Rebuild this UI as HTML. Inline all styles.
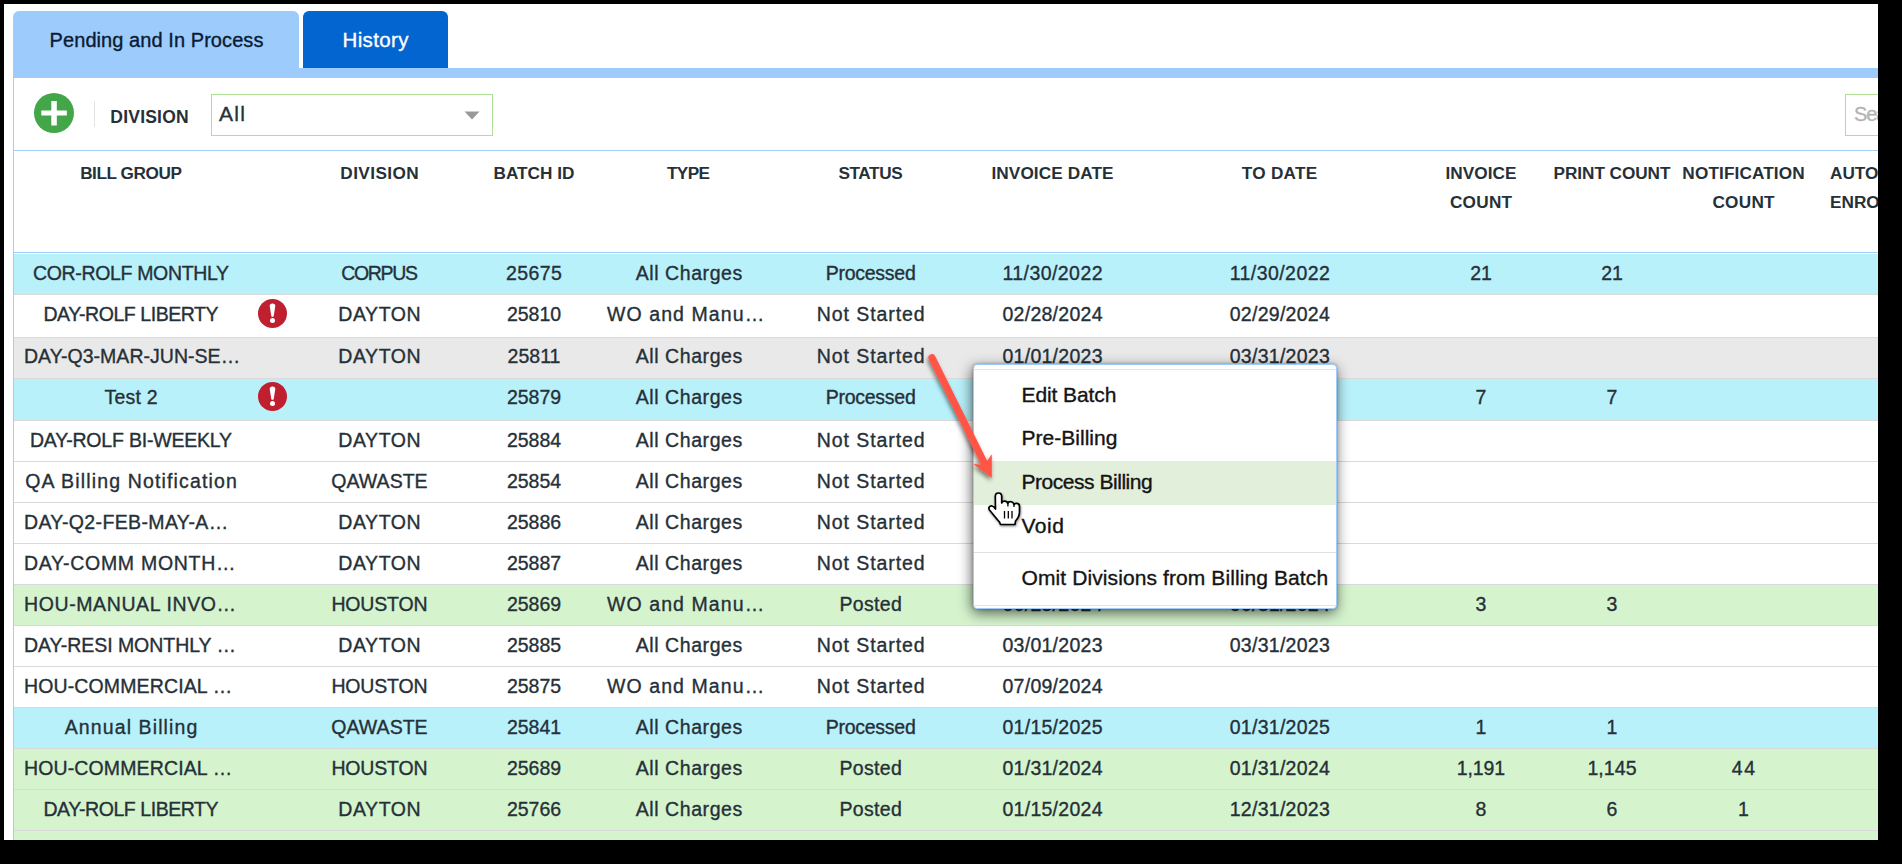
<!DOCTYPE html>
<html><head><meta charset="utf-8"><title>Billing</title>
<style>
html,body{margin:0;padding:0;}
body{width:1902px;height:864px;background:#000;position:relative;overflow:hidden;font-family:"Liberation Sans", sans-serif;}
.r{-webkit-text-stroke:0.35px currentColor;}
</style></head><body>
<div style="position:absolute;left:0;top:0;width:1878px;height:840px;overflow:hidden;">
<div style="position:absolute;left:4px;top:4px;width:1874px;height:836px;background:#fff;"></div>
<div style="position:absolute;left:13px;top:11px;width:286px;height:58px;background:#9dcbfc;border-radius:6px 6px 0 0;"></div>
<div style="position:absolute;left:303px;top:11px;width:145px;height:57px;background:#0365d0;border-radius:6px 6px 0 0;"></div>
<div style="position:absolute;left:13px;top:68px;width:1865px;height:10px;background:#9dcbfc;"></div>
<div class="r" style="position:absolute;left:-143.50px;top:30.07px;width:600px;height:20px;line-height:20px;font-size:20px;font-weight:400;color:#0b1b33;text-align:center;white-space:nowrap;letter-spacing:0.068px;margin-left:0.034px;">Pending and In Process</div>
<div class="r" style="position:absolute;left:75.50px;top:29.64px;width:600px;height:20.5px;line-height:20.5px;font-size:20.5px;font-weight:400;color:#ffffff;text-align:center;white-space:nowrap;letter-spacing:0.341px;margin-left:0.171px;">History</div>
<div style="position:absolute;left:13px;top:78px;width:1px;height:762px;background:#a3ccf7;"></div>
<svg style="position:absolute;left:34px;top:93px" width="40" height="40" viewBox="0 0 40 40"><circle cx="20" cy="20" r="20" fill="#43a648"/><rect x="7.3" y="17.5" width="25.5" height="5" fill="#fff"/><rect x="17.3" y="8" width="5.5" height="24.5" fill="#fff"/></svg>
<div style="position:absolute;left:94px;top:101px;width:1px;height:26px;background:#e3e3e3;"></div>
<div style="position:absolute;left:-150.50px;top:109.18px;width:600px;height:17.5px;line-height:17.5px;font-size:17.5px;font-weight:700;color:#263038;text-align:center;white-space:nowrap;letter-spacing:0.207px;margin-left:0.103px;">DIVISION</div>
<div style="position:absolute;left:211px;top:94px;width:282px;height:42px;border:1px solid #ade196;box-sizing:border-box;background:#fff;"></div>
<div class="r" style="position:absolute;left:219.00px;top:103.22px;width:1000px;height:21px;line-height:21px;font-size:21px;font-weight:400;color:#263038;text-align:left;white-space:nowrap;letter-spacing:1.273px;">All</div>
<svg style="position:absolute;left:464px;top:111px" width="16" height="9" viewBox="0 0 16 9"><path d="M0.5 0.5 L15.5 0.5 L8 8.5 Z" fill="#999"/></svg>
<div style="position:absolute;left:1845px;top:94px;width:40px;height:42px;border:1px solid #ade196;box-sizing:border-box;background:#fff;"></div>
<div class="r" style="position:absolute;left:1854.00px;top:104.07px;width:1000px;height:20px;line-height:20px;font-size:20px;font-weight:400;color:#b4b4b4;text-align:left;white-space:nowrap;letter-spacing:-1.2px;">Search</div>
<div style="position:absolute;left:13px;top:150px;width:1865px;height:1px;background:#a3ccf7;"></div>
<div style="position:absolute;left:13px;top:252px;width:1865px;height:1px;background:#a3ccf7;"></div>
<div style="position:absolute;left:-169.00px;top:165.14px;width:600px;height:17.2px;line-height:17.2px;font-size:17.2px;font-weight:700;color:#263038;text-align:center;white-space:nowrap;letter-spacing:-0.438px;margin-left:-0.219px;">BILL GROUP</div>
<div style="position:absolute;left:79.50px;top:165.14px;width:600px;height:17.2px;line-height:17.2px;font-size:17.2px;font-weight:700;color:#263038;text-align:center;white-space:nowrap;letter-spacing:0.399px;margin-left:0.200px;">DIVISION</div>
<div style="position:absolute;left:234.00px;top:165.14px;width:600px;height:17.2px;line-height:17.2px;font-size:17.2px;font-weight:700;color:#263038;text-align:center;white-space:nowrap;letter-spacing:0.015px;margin-left:0.007px;">BATCH ID</div>
<div style="position:absolute;left:388.50px;top:165.14px;width:600px;height:17.2px;line-height:17.2px;font-size:17.2px;font-weight:700;color:#263038;text-align:center;white-space:nowrap;letter-spacing:-0.581px;margin-left:-0.290px;">TYPE</div>
<div style="position:absolute;left:570.50px;top:165.14px;width:600px;height:17.2px;line-height:17.2px;font-size:17.2px;font-weight:700;color:#263038;text-align:center;white-space:nowrap;letter-spacing:-0.391px;margin-left:-0.196px;">STATUS</div>
<div style="position:absolute;left:752.50px;top:165.14px;width:600px;height:17.2px;line-height:17.2px;font-size:17.2px;font-weight:700;color:#263038;text-align:center;white-space:nowrap;letter-spacing:0.107px;margin-left:0.054px;">INVOICE DATE</div>
<div style="position:absolute;left:979.50px;top:165.14px;width:600px;height:17.2px;line-height:17.2px;font-size:17.2px;font-weight:700;color:#263038;text-align:center;white-space:nowrap;letter-spacing:0.267px;margin-left:0.134px;">TO DATE</div>
<div style="position:absolute;left:1181.00px;top:165.14px;width:600px;height:17.2px;line-height:17.2px;font-size:17.2px;font-weight:700;color:#263038;text-align:center;white-space:nowrap;letter-spacing:0.029px;margin-left:0.015px;">INVOICE</div>
<div style="position:absolute;left:1181.00px;top:194.14px;width:600px;height:17.2px;line-height:17.2px;font-size:17.2px;font-weight:700;color:#263038;text-align:center;white-space:nowrap;letter-spacing:0.260px;margin-left:0.130px;">COUNT</div>
<div style="position:absolute;left:1312.00px;top:165.14px;width:600px;height:17.2px;line-height:17.2px;font-size:17.2px;font-weight:700;color:#263038;text-align:center;white-space:nowrap;letter-spacing:-0.061px;margin-left:-0.030px;">PRINT COUNT</div>
<div style="position:absolute;left:1443.50px;top:165.14px;width:600px;height:17.2px;line-height:17.2px;font-size:17.2px;font-weight:700;color:#263038;text-align:center;white-space:nowrap;letter-spacing:0.119px;margin-left:0.060px;">NOTIFICATION</div>
<div style="position:absolute;left:1443.50px;top:194.14px;width:600px;height:17.2px;line-height:17.2px;font-size:17.2px;font-weight:700;color:#263038;text-align:center;white-space:nowrap;letter-spacing:0.260px;margin-left:0.130px;">COUNT</div>
<div style="position:absolute;left:1830.00px;top:165.14px;width:1000px;height:17.2px;line-height:17.2px;font-size:17.2px;font-weight:700;color:#263038;text-align:left;white-space:nowrap;">AUTO</div>
<div style="position:absolute;left:1830.00px;top:194.14px;width:1000px;height:17.2px;line-height:17.2px;font-size:17.2px;font-weight:700;color:#263038;text-align:left;white-space:nowrap;">ENROLLED</div>
<div style="position:absolute;left:14px;top:254px;width:1864px;height:40px;background:#b9f1fb;"></div>
<div style="position:absolute;left:14px;top:294px;width:1864px;height:1px;background:#dadada;"></div>
<div class="r" style="position:absolute;left:-169.00px;top:264.49px;width:600px;height:19.5px;line-height:19.5px;font-size:19.5px;font-weight:400;color:#263038;text-align:center;white-space:nowrap;letter-spacing:-0.327px;margin-left:-0.163px;">COR-ROLF MONTHLY</div>
<div class="r" style="position:absolute;left:79.50px;top:264.49px;width:600px;height:19.5px;line-height:19.5px;font-size:19.5px;font-weight:400;color:#263038;text-align:center;white-space:nowrap;letter-spacing:-1.337px;margin-left:-0.668px;">CORPUS</div>
<div class="r" style="position:absolute;left:234.00px;top:264.49px;width:600px;height:19.5px;line-height:19.5px;font-size:19.5px;font-weight:400;color:#263038;text-align:center;white-space:nowrap;letter-spacing:0.430px;margin-left:0.215px;">25675</div>
<div class="r" style="position:absolute;left:389.00px;top:264.49px;width:600px;height:19.5px;line-height:19.5px;font-size:19.5px;font-weight:400;color:#263038;text-align:center;white-space:nowrap;letter-spacing:0.576px;margin-left:0.288px;">All Charges</div>
<div class="r" style="position:absolute;left:570.70px;top:264.49px;width:600px;height:19.5px;line-height:19.5px;font-size:19.5px;font-weight:400;color:#263038;text-align:center;white-space:nowrap;letter-spacing:-0.248px;margin-left:-0.124px;">Processed</div>
<div class="r" style="position:absolute;left:752.50px;top:264.49px;width:600px;height:19.5px;line-height:19.5px;font-size:19.5px;font-weight:400;color:#263038;text-align:center;white-space:nowrap;letter-spacing:0.433px;margin-left:0.217px;">11/30/2022</div>
<div class="r" style="position:absolute;left:979.80px;top:264.49px;width:600px;height:19.5px;line-height:19.5px;font-size:19.5px;font-weight:400;color:#263038;text-align:center;white-space:nowrap;letter-spacing:0.433px;margin-left:0.217px;">11/30/2022</div>
<div class="r" style="position:absolute;left:1181.00px;top:264.49px;width:600px;height:19.5px;line-height:19.5px;font-size:19.5px;font-weight:400;color:#263038;text-align:center;white-space:nowrap;">21</div>
<div class="r" style="position:absolute;left:1312.00px;top:264.49px;width:600px;height:19.5px;line-height:19.5px;font-size:19.5px;font-weight:400;color:#263038;text-align:center;white-space:nowrap;">21</div>
<div class="r" style="position:absolute;left:1443.50px;top:264.49px;width:600px;height:19.5px;line-height:19.5px;font-size:19.5px;font-weight:400;color:#263038;text-align:center;white-space:nowrap;"></div>
<div style="position:absolute;left:14px;top:295px;width:1864px;height:42px;background:#ffffff;"></div>
<div style="position:absolute;left:14px;top:337px;width:1864px;height:1px;background:#dadada;"></div>
<div class="r" style="position:absolute;left:-169.00px;top:305.49px;width:600px;height:19.5px;line-height:19.5px;font-size:19.5px;font-weight:400;color:#263038;text-align:center;white-space:nowrap;letter-spacing:-0.443px;margin-left:-0.222px;">DAY-ROLF LIBERTY</div>
<svg style="position:absolute;left:257.9px;top:299.0px" width="29" height="29" viewBox="0 0 29 29"><circle cx="14.5" cy="14.5" r="14.5" fill="#c01f2f"/><path d="M11.7 7 Q11.7 4.5 14.5 4.5 Q17.3 4.5 17.3 7 L15.7 17.3 Q14.5 18.3 13.3 17.3 Z" fill="#fff"/><circle cx="14.5" cy="21.4" r="2.5" fill="#fff"/></svg>
<div class="r" style="position:absolute;left:79.50px;top:305.49px;width:600px;height:19.5px;line-height:19.5px;font-size:19.5px;font-weight:400;color:#263038;text-align:center;white-space:nowrap;letter-spacing:0.557px;margin-left:0.279px;">DAYTON</div>
<div class="r" style="position:absolute;left:234.00px;top:305.49px;width:600px;height:19.5px;line-height:19.5px;font-size:19.5px;font-weight:400;color:#263038;text-align:center;white-space:nowrap;">25810</div>
<div class="r" style="position:absolute;left:607.00px;top:305.49px;width:1000px;height:19.5px;line-height:19.5px;font-size:19.5px;font-weight:400;color:#263038;text-align:left;white-space:nowrap;letter-spacing:1.084px;">WO and Manu…</div>
<div class="r" style="position:absolute;left:570.70px;top:305.49px;width:600px;height:19.5px;line-height:19.5px;font-size:19.5px;font-weight:400;color:#263038;text-align:center;white-space:nowrap;letter-spacing:0.931px;margin-left:0.466px;">Not Started</div>
<div class="r" style="position:absolute;left:752.50px;top:305.49px;width:600px;height:19.5px;line-height:19.5px;font-size:19.5px;font-weight:400;color:#263038;text-align:center;white-space:nowrap;letter-spacing:0.272px;margin-left:0.136px;">02/28/2024</div>
<div class="r" style="position:absolute;left:979.80px;top:305.49px;width:600px;height:19.5px;line-height:19.5px;font-size:19.5px;font-weight:400;color:#263038;text-align:center;white-space:nowrap;letter-spacing:0.272px;margin-left:0.136px;">02/29/2024</div>
<div class="r" style="position:absolute;left:1181.00px;top:305.49px;width:600px;height:19.5px;line-height:19.5px;font-size:19.5px;font-weight:400;color:#263038;text-align:center;white-space:nowrap;"></div>
<div class="r" style="position:absolute;left:1312.00px;top:305.49px;width:600px;height:19.5px;line-height:19.5px;font-size:19.5px;font-weight:400;color:#263038;text-align:center;white-space:nowrap;"></div>
<div class="r" style="position:absolute;left:1443.50px;top:305.49px;width:600px;height:19.5px;line-height:19.5px;font-size:19.5px;font-weight:400;color:#263038;text-align:center;white-space:nowrap;"></div>
<div style="position:absolute;left:14px;top:338px;width:1864px;height:40px;background:#e9e9e9;"></div>
<div style="position:absolute;left:14px;top:378px;width:1864px;height:1px;background:#dadada;"></div>
<div class="r" style="position:absolute;left:24.00px;top:346.99px;width:1000px;height:19.5px;line-height:19.5px;font-size:19.5px;font-weight:400;color:#263038;text-align:left;white-space:nowrap;letter-spacing:0.032px;">DAY-Q3-MAR-JUN-SE…</div>
<div class="r" style="position:absolute;left:79.50px;top:346.99px;width:600px;height:19.5px;line-height:19.5px;font-size:19.5px;font-weight:400;color:#263038;text-align:center;white-space:nowrap;letter-spacing:0.557px;margin-left:0.279px;">DAYTON</div>
<div class="r" style="position:absolute;left:234.00px;top:346.99px;width:600px;height:19.5px;line-height:19.5px;font-size:19.5px;font-weight:400;color:#263038;text-align:center;white-space:nowrap;">25811</div>
<div class="r" style="position:absolute;left:389.00px;top:346.99px;width:600px;height:19.5px;line-height:19.5px;font-size:19.5px;font-weight:400;color:#263038;text-align:center;white-space:nowrap;letter-spacing:0.576px;margin-left:0.288px;">All Charges</div>
<div class="r" style="position:absolute;left:570.70px;top:346.99px;width:600px;height:19.5px;line-height:19.5px;font-size:19.5px;font-weight:400;color:#263038;text-align:center;white-space:nowrap;letter-spacing:0.931px;margin-left:0.466px;">Not Started</div>
<div class="r" style="position:absolute;left:752.50px;top:346.99px;width:600px;height:19.5px;line-height:19.5px;font-size:19.5px;font-weight:400;color:#263038;text-align:center;white-space:nowrap;letter-spacing:0.272px;margin-left:0.136px;">01/01/2023</div>
<div class="r" style="position:absolute;left:979.80px;top:346.99px;width:600px;height:19.5px;line-height:19.5px;font-size:19.5px;font-weight:400;color:#263038;text-align:center;white-space:nowrap;letter-spacing:0.272px;margin-left:0.136px;">03/31/2023</div>
<div class="r" style="position:absolute;left:1181.00px;top:346.99px;width:600px;height:19.5px;line-height:19.5px;font-size:19.5px;font-weight:400;color:#263038;text-align:center;white-space:nowrap;"></div>
<div class="r" style="position:absolute;left:1312.00px;top:346.99px;width:600px;height:19.5px;line-height:19.5px;font-size:19.5px;font-weight:400;color:#263038;text-align:center;white-space:nowrap;"></div>
<div class="r" style="position:absolute;left:1443.50px;top:346.99px;width:600px;height:19.5px;line-height:19.5px;font-size:19.5px;font-weight:400;color:#263038;text-align:center;white-space:nowrap;"></div>
<div style="position:absolute;left:14px;top:379px;width:1864px;height:41px;background:#b9f1fb;"></div>
<div style="position:absolute;left:14px;top:420px;width:1864px;height:1px;background:#dadada;"></div>
<div class="r" style="position:absolute;left:-169.00px;top:388.49px;width:600px;height:19.5px;line-height:19.5px;font-size:19.5px;font-weight:400;color:#263038;text-align:center;white-space:nowrap;letter-spacing:0.205px;margin-left:0.102px;">Test 2</div>
<svg style="position:absolute;left:257.9px;top:382.0px" width="29" height="29" viewBox="0 0 29 29"><circle cx="14.5" cy="14.5" r="14.5" fill="#c01f2f"/><path d="M11.7 7 Q11.7 4.5 14.5 4.5 Q17.3 4.5 17.3 7 L15.7 17.3 Q14.5 18.3 13.3 17.3 Z" fill="#fff"/><circle cx="14.5" cy="21.4" r="2.5" fill="#fff"/></svg>
<div class="r" style="position:absolute;left:79.50px;top:388.49px;width:600px;height:19.5px;line-height:19.5px;font-size:19.5px;font-weight:400;color:#263038;text-align:center;white-space:nowrap;"></div>
<div class="r" style="position:absolute;left:234.00px;top:388.49px;width:600px;height:19.5px;line-height:19.5px;font-size:19.5px;font-weight:400;color:#263038;text-align:center;white-space:nowrap;">25879</div>
<div class="r" style="position:absolute;left:389.00px;top:388.49px;width:600px;height:19.5px;line-height:19.5px;font-size:19.5px;font-weight:400;color:#263038;text-align:center;white-space:nowrap;letter-spacing:0.576px;margin-left:0.288px;">All Charges</div>
<div class="r" style="position:absolute;left:570.70px;top:388.49px;width:600px;height:19.5px;line-height:19.5px;font-size:19.5px;font-weight:400;color:#263038;text-align:center;white-space:nowrap;letter-spacing:-0.248px;margin-left:-0.124px;">Processed</div>
<div class="r" style="position:absolute;left:752.50px;top:388.49px;width:600px;height:19.5px;line-height:19.5px;font-size:19.5px;font-weight:400;color:#263038;text-align:center;white-space:nowrap;letter-spacing:0.272px;margin-left:0.136px;">02/01/2024</div>
<div class="r" style="position:absolute;left:979.80px;top:388.49px;width:600px;height:19.5px;line-height:19.5px;font-size:19.5px;font-weight:400;color:#263038;text-align:center;white-space:nowrap;letter-spacing:0.272px;margin-left:0.136px;">02/29/2024</div>
<div class="r" style="position:absolute;left:1181.00px;top:388.49px;width:600px;height:19.5px;line-height:19.5px;font-size:19.5px;font-weight:400;color:#263038;text-align:center;white-space:nowrap;">7</div>
<div class="r" style="position:absolute;left:1312.00px;top:388.49px;width:600px;height:19.5px;line-height:19.5px;font-size:19.5px;font-weight:400;color:#263038;text-align:center;white-space:nowrap;">7</div>
<div class="r" style="position:absolute;left:1443.50px;top:388.49px;width:600px;height:19.5px;line-height:19.5px;font-size:19.5px;font-weight:400;color:#263038;text-align:center;white-space:nowrap;"></div>
<div style="position:absolute;left:14px;top:421px;width:1864px;height:40px;background:#ffffff;"></div>
<div style="position:absolute;left:14px;top:461px;width:1864px;height:1px;background:#dadada;"></div>
<div class="r" style="position:absolute;left:-169.00px;top:430.99px;width:600px;height:19.5px;line-height:19.5px;font-size:19.5px;font-weight:400;color:#263038;text-align:center;white-space:nowrap;letter-spacing:-0.199px;margin-left:-0.099px;">DAY-ROLF BI-WEEKLY</div>
<div class="r" style="position:absolute;left:79.50px;top:430.99px;width:600px;height:19.5px;line-height:19.5px;font-size:19.5px;font-weight:400;color:#263038;text-align:center;white-space:nowrap;letter-spacing:0.557px;margin-left:0.279px;">DAYTON</div>
<div class="r" style="position:absolute;left:234.00px;top:430.99px;width:600px;height:19.5px;line-height:19.5px;font-size:19.5px;font-weight:400;color:#263038;text-align:center;white-space:nowrap;">25884</div>
<div class="r" style="position:absolute;left:389.00px;top:430.99px;width:600px;height:19.5px;line-height:19.5px;font-size:19.5px;font-weight:400;color:#263038;text-align:center;white-space:nowrap;letter-spacing:0.576px;margin-left:0.288px;">All Charges</div>
<div class="r" style="position:absolute;left:570.70px;top:430.99px;width:600px;height:19.5px;line-height:19.5px;font-size:19.5px;font-weight:400;color:#263038;text-align:center;white-space:nowrap;letter-spacing:0.931px;margin-left:0.466px;">Not Started</div>
<div class="r" style="position:absolute;left:752.50px;top:430.99px;width:600px;height:19.5px;line-height:19.5px;font-size:19.5px;font-weight:400;color:#263038;text-align:center;white-space:nowrap;"></div>
<div class="r" style="position:absolute;left:979.80px;top:430.99px;width:600px;height:19.5px;line-height:19.5px;font-size:19.5px;font-weight:400;color:#263038;text-align:center;white-space:nowrap;"></div>
<div class="r" style="position:absolute;left:1181.00px;top:430.99px;width:600px;height:19.5px;line-height:19.5px;font-size:19.5px;font-weight:400;color:#263038;text-align:center;white-space:nowrap;"></div>
<div class="r" style="position:absolute;left:1312.00px;top:430.99px;width:600px;height:19.5px;line-height:19.5px;font-size:19.5px;font-weight:400;color:#263038;text-align:center;white-space:nowrap;"></div>
<div class="r" style="position:absolute;left:1443.50px;top:430.99px;width:600px;height:19.5px;line-height:19.5px;font-size:19.5px;font-weight:400;color:#263038;text-align:center;white-space:nowrap;"></div>
<div style="position:absolute;left:14px;top:462px;width:1864px;height:40px;background:#ffffff;"></div>
<div style="position:absolute;left:14px;top:502px;width:1864px;height:1px;background:#dadada;"></div>
<div class="r" style="position:absolute;left:-169.00px;top:471.99px;width:600px;height:19.5px;line-height:19.5px;font-size:19.5px;font-weight:400;color:#263038;text-align:center;white-space:nowrap;letter-spacing:1.147px;margin-left:0.573px;">QA Billing Notification</div>
<div class="r" style="position:absolute;left:79.50px;top:471.99px;width:600px;height:19.5px;line-height:19.5px;font-size:19.5px;font-weight:400;color:#263038;text-align:center;white-space:nowrap;letter-spacing:0.032px;margin-left:0.016px;">QAWASTE</div>
<div class="r" style="position:absolute;left:234.00px;top:471.99px;width:600px;height:19.5px;line-height:19.5px;font-size:19.5px;font-weight:400;color:#263038;text-align:center;white-space:nowrap;">25854</div>
<div class="r" style="position:absolute;left:389.00px;top:471.99px;width:600px;height:19.5px;line-height:19.5px;font-size:19.5px;font-weight:400;color:#263038;text-align:center;white-space:nowrap;letter-spacing:0.576px;margin-left:0.288px;">All Charges</div>
<div class="r" style="position:absolute;left:570.70px;top:471.99px;width:600px;height:19.5px;line-height:19.5px;font-size:19.5px;font-weight:400;color:#263038;text-align:center;white-space:nowrap;letter-spacing:0.931px;margin-left:0.466px;">Not Started</div>
<div class="r" style="position:absolute;left:752.50px;top:471.99px;width:600px;height:19.5px;line-height:19.5px;font-size:19.5px;font-weight:400;color:#263038;text-align:center;white-space:nowrap;"></div>
<div class="r" style="position:absolute;left:979.80px;top:471.99px;width:600px;height:19.5px;line-height:19.5px;font-size:19.5px;font-weight:400;color:#263038;text-align:center;white-space:nowrap;"></div>
<div class="r" style="position:absolute;left:1181.00px;top:471.99px;width:600px;height:19.5px;line-height:19.5px;font-size:19.5px;font-weight:400;color:#263038;text-align:center;white-space:nowrap;"></div>
<div class="r" style="position:absolute;left:1312.00px;top:471.99px;width:600px;height:19.5px;line-height:19.5px;font-size:19.5px;font-weight:400;color:#263038;text-align:center;white-space:nowrap;"></div>
<div class="r" style="position:absolute;left:1443.50px;top:471.99px;width:600px;height:19.5px;line-height:19.5px;font-size:19.5px;font-weight:400;color:#263038;text-align:center;white-space:nowrap;"></div>
<div style="position:absolute;left:14px;top:503px;width:1864px;height:40px;background:#ffffff;"></div>
<div style="position:absolute;left:14px;top:543px;width:1864px;height:1px;background:#dadada;"></div>
<div class="r" style="position:absolute;left:24.00px;top:512.99px;width:1000px;height:19.5px;line-height:19.5px;font-size:19.5px;font-weight:400;color:#263038;text-align:left;white-space:nowrap;letter-spacing:0.366px;">DAY-Q2-FEB-MAY-A…</div>
<div class="r" style="position:absolute;left:79.50px;top:512.99px;width:600px;height:19.5px;line-height:19.5px;font-size:19.5px;font-weight:400;color:#263038;text-align:center;white-space:nowrap;letter-spacing:0.557px;margin-left:0.279px;">DAYTON</div>
<div class="r" style="position:absolute;left:234.00px;top:512.99px;width:600px;height:19.5px;line-height:19.5px;font-size:19.5px;font-weight:400;color:#263038;text-align:center;white-space:nowrap;">25886</div>
<div class="r" style="position:absolute;left:389.00px;top:512.99px;width:600px;height:19.5px;line-height:19.5px;font-size:19.5px;font-weight:400;color:#263038;text-align:center;white-space:nowrap;letter-spacing:0.576px;margin-left:0.288px;">All Charges</div>
<div class="r" style="position:absolute;left:570.70px;top:512.99px;width:600px;height:19.5px;line-height:19.5px;font-size:19.5px;font-weight:400;color:#263038;text-align:center;white-space:nowrap;letter-spacing:0.931px;margin-left:0.466px;">Not Started</div>
<div class="r" style="position:absolute;left:752.50px;top:512.99px;width:600px;height:19.5px;line-height:19.5px;font-size:19.5px;font-weight:400;color:#263038;text-align:center;white-space:nowrap;"></div>
<div class="r" style="position:absolute;left:979.80px;top:512.99px;width:600px;height:19.5px;line-height:19.5px;font-size:19.5px;font-weight:400;color:#263038;text-align:center;white-space:nowrap;"></div>
<div class="r" style="position:absolute;left:1181.00px;top:512.99px;width:600px;height:19.5px;line-height:19.5px;font-size:19.5px;font-weight:400;color:#263038;text-align:center;white-space:nowrap;"></div>
<div class="r" style="position:absolute;left:1312.00px;top:512.99px;width:600px;height:19.5px;line-height:19.5px;font-size:19.5px;font-weight:400;color:#263038;text-align:center;white-space:nowrap;"></div>
<div class="r" style="position:absolute;left:1443.50px;top:512.99px;width:600px;height:19.5px;line-height:19.5px;font-size:19.5px;font-weight:400;color:#263038;text-align:center;white-space:nowrap;"></div>
<div style="position:absolute;left:14px;top:544px;width:1864px;height:40px;background:#ffffff;"></div>
<div style="position:absolute;left:14px;top:584px;width:1864px;height:1px;background:#dadada;"></div>
<div class="r" style="position:absolute;left:24.00px;top:553.99px;width:1000px;height:19.5px;line-height:19.5px;font-size:19.5px;font-weight:400;color:#263038;text-align:left;white-space:nowrap;letter-spacing:0.718px;">DAY-COMM MONTH…</div>
<div class="r" style="position:absolute;left:79.50px;top:553.99px;width:600px;height:19.5px;line-height:19.5px;font-size:19.5px;font-weight:400;color:#263038;text-align:center;white-space:nowrap;letter-spacing:0.557px;margin-left:0.279px;">DAYTON</div>
<div class="r" style="position:absolute;left:234.00px;top:553.99px;width:600px;height:19.5px;line-height:19.5px;font-size:19.5px;font-weight:400;color:#263038;text-align:center;white-space:nowrap;">25887</div>
<div class="r" style="position:absolute;left:389.00px;top:553.99px;width:600px;height:19.5px;line-height:19.5px;font-size:19.5px;font-weight:400;color:#263038;text-align:center;white-space:nowrap;letter-spacing:0.576px;margin-left:0.288px;">All Charges</div>
<div class="r" style="position:absolute;left:570.70px;top:553.99px;width:600px;height:19.5px;line-height:19.5px;font-size:19.5px;font-weight:400;color:#263038;text-align:center;white-space:nowrap;letter-spacing:0.931px;margin-left:0.466px;">Not Started</div>
<div class="r" style="position:absolute;left:752.50px;top:553.99px;width:600px;height:19.5px;line-height:19.5px;font-size:19.5px;font-weight:400;color:#263038;text-align:center;white-space:nowrap;"></div>
<div class="r" style="position:absolute;left:979.80px;top:553.99px;width:600px;height:19.5px;line-height:19.5px;font-size:19.5px;font-weight:400;color:#263038;text-align:center;white-space:nowrap;"></div>
<div class="r" style="position:absolute;left:1181.00px;top:553.99px;width:600px;height:19.5px;line-height:19.5px;font-size:19.5px;font-weight:400;color:#263038;text-align:center;white-space:nowrap;"></div>
<div class="r" style="position:absolute;left:1312.00px;top:553.99px;width:600px;height:19.5px;line-height:19.5px;font-size:19.5px;font-weight:400;color:#263038;text-align:center;white-space:nowrap;"></div>
<div class="r" style="position:absolute;left:1443.50px;top:553.99px;width:600px;height:19.5px;line-height:19.5px;font-size:19.5px;font-weight:400;color:#263038;text-align:center;white-space:nowrap;"></div>
<div style="position:absolute;left:14px;top:585px;width:1864px;height:40px;background:#d5f4ce;"></div>
<div style="position:absolute;left:14px;top:625px;width:1864px;height:1px;background:#dadada;"></div>
<div class="r" style="position:absolute;left:24.00px;top:594.99px;width:1000px;height:19.5px;line-height:19.5px;font-size:19.5px;font-weight:400;color:#263038;text-align:left;white-space:nowrap;letter-spacing:0.606px;">HOU-MANUAL INVO…</div>
<div class="r" style="position:absolute;left:79.50px;top:594.99px;width:600px;height:19.5px;line-height:19.5px;font-size:19.5px;font-weight:400;color:#263038;text-align:center;white-space:nowrap;letter-spacing:-0.150px;margin-left:-0.075px;">HOUSTON</div>
<div class="r" style="position:absolute;left:234.00px;top:594.99px;width:600px;height:19.5px;line-height:19.5px;font-size:19.5px;font-weight:400;color:#263038;text-align:center;white-space:nowrap;">25869</div>
<div class="r" style="position:absolute;left:607.00px;top:594.99px;width:1000px;height:19.5px;line-height:19.5px;font-size:19.5px;font-weight:400;color:#263038;text-align:left;white-space:nowrap;letter-spacing:1.084px;">WO and Manu…</div>
<div class="r" style="position:absolute;left:570.70px;top:594.99px;width:600px;height:19.5px;line-height:19.5px;font-size:19.5px;font-weight:400;color:#263038;text-align:center;white-space:nowrap;letter-spacing:0.347px;margin-left:0.174px;">Posted</div>
<div class="r" style="position:absolute;left:752.50px;top:594.99px;width:600px;height:19.5px;line-height:19.5px;font-size:19.5px;font-weight:400;color:#263038;text-align:center;white-space:nowrap;letter-spacing:0.272px;margin-left:0.136px;">06/25/2024</div>
<div class="r" style="position:absolute;left:979.80px;top:594.99px;width:600px;height:19.5px;line-height:19.5px;font-size:19.5px;font-weight:400;color:#263038;text-align:center;white-space:nowrap;letter-spacing:0.272px;margin-left:0.136px;">06/31/2024</div>
<div class="r" style="position:absolute;left:1181.00px;top:594.99px;width:600px;height:19.5px;line-height:19.5px;font-size:19.5px;font-weight:400;color:#263038;text-align:center;white-space:nowrap;">3</div>
<div class="r" style="position:absolute;left:1312.00px;top:594.99px;width:600px;height:19.5px;line-height:19.5px;font-size:19.5px;font-weight:400;color:#263038;text-align:center;white-space:nowrap;">3</div>
<div class="r" style="position:absolute;left:1443.50px;top:594.99px;width:600px;height:19.5px;line-height:19.5px;font-size:19.5px;font-weight:400;color:#263038;text-align:center;white-space:nowrap;"></div>
<div style="position:absolute;left:14px;top:626px;width:1864px;height:40px;background:#ffffff;"></div>
<div style="position:absolute;left:14px;top:666px;width:1864px;height:1px;background:#dadada;"></div>
<div class="r" style="position:absolute;left:24.00px;top:635.99px;width:1000px;height:19.5px;line-height:19.5px;font-size:19.5px;font-weight:400;color:#263038;text-align:left;white-space:nowrap;letter-spacing:-0.041px;">DAY-RESI MONTHLY …</div>
<div class="r" style="position:absolute;left:79.50px;top:635.99px;width:600px;height:19.5px;line-height:19.5px;font-size:19.5px;font-weight:400;color:#263038;text-align:center;white-space:nowrap;letter-spacing:0.557px;margin-left:0.279px;">DAYTON</div>
<div class="r" style="position:absolute;left:234.00px;top:635.99px;width:600px;height:19.5px;line-height:19.5px;font-size:19.5px;font-weight:400;color:#263038;text-align:center;white-space:nowrap;">25885</div>
<div class="r" style="position:absolute;left:389.00px;top:635.99px;width:600px;height:19.5px;line-height:19.5px;font-size:19.5px;font-weight:400;color:#263038;text-align:center;white-space:nowrap;letter-spacing:0.576px;margin-left:0.288px;">All Charges</div>
<div class="r" style="position:absolute;left:570.70px;top:635.99px;width:600px;height:19.5px;line-height:19.5px;font-size:19.5px;font-weight:400;color:#263038;text-align:center;white-space:nowrap;letter-spacing:0.931px;margin-left:0.466px;">Not Started</div>
<div class="r" style="position:absolute;left:752.50px;top:635.99px;width:600px;height:19.5px;line-height:19.5px;font-size:19.5px;font-weight:400;color:#263038;text-align:center;white-space:nowrap;letter-spacing:0.272px;margin-left:0.136px;">03/01/2023</div>
<div class="r" style="position:absolute;left:979.80px;top:635.99px;width:600px;height:19.5px;line-height:19.5px;font-size:19.5px;font-weight:400;color:#263038;text-align:center;white-space:nowrap;letter-spacing:0.272px;margin-left:0.136px;">03/31/2023</div>
<div class="r" style="position:absolute;left:1181.00px;top:635.99px;width:600px;height:19.5px;line-height:19.5px;font-size:19.5px;font-weight:400;color:#263038;text-align:center;white-space:nowrap;"></div>
<div class="r" style="position:absolute;left:1312.00px;top:635.99px;width:600px;height:19.5px;line-height:19.5px;font-size:19.5px;font-weight:400;color:#263038;text-align:center;white-space:nowrap;"></div>
<div class="r" style="position:absolute;left:1443.50px;top:635.99px;width:600px;height:19.5px;line-height:19.5px;font-size:19.5px;font-weight:400;color:#263038;text-align:center;white-space:nowrap;"></div>
<div style="position:absolute;left:14px;top:667px;width:1864px;height:40px;background:#ffffff;"></div>
<div style="position:absolute;left:14px;top:707px;width:1864px;height:1px;background:#dadada;"></div>
<div class="r" style="position:absolute;left:24.00px;top:676.99px;width:1000px;height:19.5px;line-height:19.5px;font-size:19.5px;font-weight:400;color:#263038;text-align:left;white-space:nowrap;letter-spacing:0.130px;">HOU-COMMERCIAL …</div>
<div class="r" style="position:absolute;left:79.50px;top:676.99px;width:600px;height:19.5px;line-height:19.5px;font-size:19.5px;font-weight:400;color:#263038;text-align:center;white-space:nowrap;letter-spacing:-0.150px;margin-left:-0.075px;">HOUSTON</div>
<div class="r" style="position:absolute;left:234.00px;top:676.99px;width:600px;height:19.5px;line-height:19.5px;font-size:19.5px;font-weight:400;color:#263038;text-align:center;white-space:nowrap;">25875</div>
<div class="r" style="position:absolute;left:607.00px;top:676.99px;width:1000px;height:19.5px;line-height:19.5px;font-size:19.5px;font-weight:400;color:#263038;text-align:left;white-space:nowrap;letter-spacing:1.084px;">WO and Manu…</div>
<div class="r" style="position:absolute;left:570.70px;top:676.99px;width:600px;height:19.5px;line-height:19.5px;font-size:19.5px;font-weight:400;color:#263038;text-align:center;white-space:nowrap;letter-spacing:0.931px;margin-left:0.466px;">Not Started</div>
<div class="r" style="position:absolute;left:752.50px;top:676.99px;width:600px;height:19.5px;line-height:19.5px;font-size:19.5px;font-weight:400;color:#263038;text-align:center;white-space:nowrap;letter-spacing:0.272px;margin-left:0.136px;">07/09/2024</div>
<div class="r" style="position:absolute;left:979.80px;top:676.99px;width:600px;height:19.5px;line-height:19.5px;font-size:19.5px;font-weight:400;color:#263038;text-align:center;white-space:nowrap;"></div>
<div class="r" style="position:absolute;left:1181.00px;top:676.99px;width:600px;height:19.5px;line-height:19.5px;font-size:19.5px;font-weight:400;color:#263038;text-align:center;white-space:nowrap;"></div>
<div class="r" style="position:absolute;left:1312.00px;top:676.99px;width:600px;height:19.5px;line-height:19.5px;font-size:19.5px;font-weight:400;color:#263038;text-align:center;white-space:nowrap;"></div>
<div class="r" style="position:absolute;left:1443.50px;top:676.99px;width:600px;height:19.5px;line-height:19.5px;font-size:19.5px;font-weight:400;color:#263038;text-align:center;white-space:nowrap;"></div>
<div style="position:absolute;left:14px;top:708px;width:1864px;height:40px;background:#b9f1fb;"></div>
<div style="position:absolute;left:14px;top:748px;width:1864px;height:1px;background:#dadada;"></div>
<div class="r" style="position:absolute;left:-169.00px;top:717.99px;width:600px;height:19.5px;line-height:19.5px;font-size:19.5px;font-weight:400;color:#263038;text-align:center;white-space:nowrap;letter-spacing:1.106px;margin-left:0.553px;">Annual Billing</div>
<div class="r" style="position:absolute;left:79.50px;top:717.99px;width:600px;height:19.5px;line-height:19.5px;font-size:19.5px;font-weight:400;color:#263038;text-align:center;white-space:nowrap;letter-spacing:0.032px;margin-left:0.016px;">QAWASTE</div>
<div class="r" style="position:absolute;left:234.00px;top:717.99px;width:600px;height:19.5px;line-height:19.5px;font-size:19.5px;font-weight:400;color:#263038;text-align:center;white-space:nowrap;">25841</div>
<div class="r" style="position:absolute;left:389.00px;top:717.99px;width:600px;height:19.5px;line-height:19.5px;font-size:19.5px;font-weight:400;color:#263038;text-align:center;white-space:nowrap;letter-spacing:0.576px;margin-left:0.288px;">All Charges</div>
<div class="r" style="position:absolute;left:570.70px;top:717.99px;width:600px;height:19.5px;line-height:19.5px;font-size:19.5px;font-weight:400;color:#263038;text-align:center;white-space:nowrap;letter-spacing:-0.248px;margin-left:-0.124px;">Processed</div>
<div class="r" style="position:absolute;left:752.50px;top:717.99px;width:600px;height:19.5px;line-height:19.5px;font-size:19.5px;font-weight:400;color:#263038;text-align:center;white-space:nowrap;letter-spacing:0.272px;margin-left:0.136px;">01/15/2025</div>
<div class="r" style="position:absolute;left:979.80px;top:717.99px;width:600px;height:19.5px;line-height:19.5px;font-size:19.5px;font-weight:400;color:#263038;text-align:center;white-space:nowrap;letter-spacing:0.272px;margin-left:0.136px;">01/31/2025</div>
<div class="r" style="position:absolute;left:1181.00px;top:717.99px;width:600px;height:19.5px;line-height:19.5px;font-size:19.5px;font-weight:400;color:#263038;text-align:center;white-space:nowrap;">1</div>
<div class="r" style="position:absolute;left:1312.00px;top:717.99px;width:600px;height:19.5px;line-height:19.5px;font-size:19.5px;font-weight:400;color:#263038;text-align:center;white-space:nowrap;">1</div>
<div class="r" style="position:absolute;left:1443.50px;top:717.99px;width:600px;height:19.5px;line-height:19.5px;font-size:19.5px;font-weight:400;color:#263038;text-align:center;white-space:nowrap;"></div>
<div style="position:absolute;left:14px;top:749px;width:1864px;height:40px;background:#d5f4ce;"></div>
<div style="position:absolute;left:14px;top:789px;width:1864px;height:1px;background:#dadada;"></div>
<div class="r" style="position:absolute;left:24.00px;top:758.99px;width:1000px;height:19.5px;line-height:19.5px;font-size:19.5px;font-weight:400;color:#263038;text-align:left;white-space:nowrap;letter-spacing:0.130px;">HOU-COMMERCIAL …</div>
<div class="r" style="position:absolute;left:79.50px;top:758.99px;width:600px;height:19.5px;line-height:19.5px;font-size:19.5px;font-weight:400;color:#263038;text-align:center;white-space:nowrap;letter-spacing:-0.150px;margin-left:-0.075px;">HOUSTON</div>
<div class="r" style="position:absolute;left:234.00px;top:758.99px;width:600px;height:19.5px;line-height:19.5px;font-size:19.5px;font-weight:400;color:#263038;text-align:center;white-space:nowrap;">25689</div>
<div class="r" style="position:absolute;left:389.00px;top:758.99px;width:600px;height:19.5px;line-height:19.5px;font-size:19.5px;font-weight:400;color:#263038;text-align:center;white-space:nowrap;letter-spacing:0.576px;margin-left:0.288px;">All Charges</div>
<div class="r" style="position:absolute;left:570.70px;top:758.99px;width:600px;height:19.5px;line-height:19.5px;font-size:19.5px;font-weight:400;color:#263038;text-align:center;white-space:nowrap;letter-spacing:0.347px;margin-left:0.174px;">Posted</div>
<div class="r" style="position:absolute;left:752.50px;top:758.99px;width:600px;height:19.5px;line-height:19.5px;font-size:19.5px;font-weight:400;color:#263038;text-align:center;white-space:nowrap;letter-spacing:0.272px;margin-left:0.136px;">01/31/2024</div>
<div class="r" style="position:absolute;left:979.80px;top:758.99px;width:600px;height:19.5px;line-height:19.5px;font-size:19.5px;font-weight:400;color:#263038;text-align:center;white-space:nowrap;letter-spacing:0.272px;margin-left:0.136px;">01/31/2024</div>
<div class="r" style="position:absolute;left:1181.00px;top:758.99px;width:600px;height:19.5px;line-height:19.5px;font-size:19.5px;font-weight:400;color:#263038;text-align:center;white-space:nowrap;letter-spacing:-0.114px;margin-left:-0.057px;">1,191</div>
<div class="r" style="position:absolute;left:1312.00px;top:758.99px;width:600px;height:19.5px;line-height:19.5px;font-size:19.5px;font-weight:400;color:#263038;text-align:center;white-space:nowrap;letter-spacing:0.061px;margin-left:0.030px;">1,145</div>
<div class="r" style="position:absolute;left:1443.50px;top:758.99px;width:600px;height:19.5px;line-height:19.5px;font-size:19.5px;font-weight:400;color:#263038;text-align:center;white-space:nowrap;letter-spacing:1.552px;margin-left:0.776px;">44</div>
<div style="position:absolute;left:14px;top:790px;width:1864px;height:40px;background:#d5f4ce;"></div>
<div style="position:absolute;left:14px;top:830px;width:1864px;height:1px;background:#dadada;"></div>
<div class="r" style="position:absolute;left:-169.00px;top:799.99px;width:600px;height:19.5px;line-height:19.5px;font-size:19.5px;font-weight:400;color:#263038;text-align:center;white-space:nowrap;letter-spacing:-0.443px;margin-left:-0.222px;">DAY-ROLF LIBERTY</div>
<div class="r" style="position:absolute;left:79.50px;top:799.99px;width:600px;height:19.5px;line-height:19.5px;font-size:19.5px;font-weight:400;color:#263038;text-align:center;white-space:nowrap;letter-spacing:0.557px;margin-left:0.279px;">DAYTON</div>
<div class="r" style="position:absolute;left:234.00px;top:799.99px;width:600px;height:19.5px;line-height:19.5px;font-size:19.5px;font-weight:400;color:#263038;text-align:center;white-space:nowrap;">25766</div>
<div class="r" style="position:absolute;left:389.00px;top:799.99px;width:600px;height:19.5px;line-height:19.5px;font-size:19.5px;font-weight:400;color:#263038;text-align:center;white-space:nowrap;letter-spacing:0.576px;margin-left:0.288px;">All Charges</div>
<div class="r" style="position:absolute;left:570.70px;top:799.99px;width:600px;height:19.5px;line-height:19.5px;font-size:19.5px;font-weight:400;color:#263038;text-align:center;white-space:nowrap;letter-spacing:0.347px;margin-left:0.174px;">Posted</div>
<div class="r" style="position:absolute;left:752.50px;top:799.99px;width:600px;height:19.5px;line-height:19.5px;font-size:19.5px;font-weight:400;color:#263038;text-align:center;white-space:nowrap;letter-spacing:0.272px;margin-left:0.136px;">01/15/2024</div>
<div class="r" style="position:absolute;left:979.80px;top:799.99px;width:600px;height:19.5px;line-height:19.5px;font-size:19.5px;font-weight:400;color:#263038;text-align:center;white-space:nowrap;letter-spacing:0.272px;margin-left:0.136px;">12/31/2023</div>
<div class="r" style="position:absolute;left:1181.00px;top:799.99px;width:600px;height:19.5px;line-height:19.5px;font-size:19.5px;font-weight:400;color:#263038;text-align:center;white-space:nowrap;">8</div>
<div class="r" style="position:absolute;left:1312.00px;top:799.99px;width:600px;height:19.5px;line-height:19.5px;font-size:19.5px;font-weight:400;color:#263038;text-align:center;white-space:nowrap;">6</div>
<div class="r" style="position:absolute;left:1443.50px;top:799.99px;width:600px;height:19.5px;line-height:19.5px;font-size:19.5px;font-weight:400;color:#263038;text-align:center;white-space:nowrap;">1</div>
<div style="position:absolute;left:14px;top:831px;width:1864px;height:9px;background:#d5f4ce;"></div>
<div style="position:absolute;left:973px;top:364px;width:364px;height:245px;box-sizing:border-box;border:1px solid #9fcbf8;border-radius:4px;background:#fff;box-shadow:0 0 3px rgba(0,0,0,0.3), -1px 4px 14px rgba(0,0,0,0.62);"></div>
<div style="position:absolute;left:974px;top:369px;width:362px;height:1px;background:#e4e4e4;"></div>
<div style="position:absolute;left:974px;top:605px;width:362px;height:1px;background:#e4e4e4;"></div>
<div style="position:absolute;left:974px;top:461px;width:362px;height:44px;background:#e2efda;"></div>
<div style="position:absolute;left:974px;top:552px;width:362px;height:1px;background:#e0e0e0;"></div>
<div class="r" style="position:absolute;left:1021.50px;top:384.22px;width:1000px;height:21px;line-height:21px;font-size:21px;font-weight:400;color:#141414;text-align:left;white-space:nowrap;letter-spacing:-0.094px;">Edit Batch</div>
<div class="r" style="position:absolute;left:1021.50px;top:427.22px;width:1000px;height:21px;line-height:21px;font-size:21px;font-weight:400;color:#141414;text-align:left;white-space:nowrap;letter-spacing:0.019px;">Pre-Billing</div>
<div class="r" style="position:absolute;left:1021.50px;top:471.22px;width:1000px;height:21px;line-height:21px;font-size:21px;font-weight:400;color:#141414;text-align:left;white-space:nowrap;letter-spacing:-0.467px;">Process Billing</div>
<div class="r" style="position:absolute;left:1021.50px;top:515.22px;width:1000px;height:21px;line-height:21px;font-size:21px;font-weight:400;color:#141414;text-align:left;white-space:nowrap;letter-spacing:0.505px;">Void</div>
<div class="r" style="position:absolute;left:1021.50px;top:567.22px;width:1000px;height:21px;line-height:21px;font-size:21px;font-weight:400;color:#141414;text-align:left;white-space:nowrap;letter-spacing:0.099px;">Omit Divisions from Billing Batch</div>
<svg style="position:absolute;left:900px;top:340px;overflow:visible" width="120" height="160" viewBox="900 340 120 160"><defs><filter id="sh" x="-50%" y="-50%" width="200%" height="200%"><feDropShadow dx="-1" dy="2.5" stdDeviation="2.2" flood-color="#000" flood-opacity="0.5"/></filter></defs><g filter="url(#sh)"><path d="M932 357.8 L984.3 463" stroke="#fe5547" stroke-width="7.2" stroke-linecap="round" fill="none"/><path d="M987.4 461.1 L991.6 454.9 L991.6 477.4 L973.9 464.2 L980.8 464.9 Z" fill="#fe5547" stroke="#fe5547" stroke-width="0.6" stroke-linejoin="round"/></g></svg>
<svg style="position:absolute;left:980px;top:480px;overflow:visible" width="50" height="50" viewBox="980 480 50 50"><defs><filter id="sh2" x="-50%" y="-50%" width="200%" height="200%"><feDropShadow dx="0.6" dy="1.2" stdDeviation="0.9" flood-color="#000" flood-opacity="0.45"/></filter></defs><path filter="url(#sh2)" d="M998.5 493 C1000.5 493 1001.7 494.5 1001.7 496.5 L1001.7 503 C1002.5 500.5 1007 500.5 1007.8 503.5 C1008.5 501 1013 501 1014 504.5 C1015 502.5 1019.5 503 1019.5 506.5 L1019.5 512 C1019.5 516 1017.5 519 1015.5 521 L1015 524.5 L1000.5 524.5 L999.5 522 C996 518 992 513 989.5 510 C988 508 989.5 505.5 992 506 C993.5 506.3 994.5 507.5 995.5 509 L995.3 496.5 C995.3 494.5 996.5 493 998.5 493 Z" fill="#fff" stroke="#000" stroke-width="1.7" stroke-linejoin="round"/><path d="M1004.5 511 V518.5 M1008.3 511 V518.5 M1012 511 V518.5 M1007.9 503.5 V506.5 M1014 504.5 V507" stroke="#000" stroke-width="1.3"/></svg>
</div>
</body></html>
